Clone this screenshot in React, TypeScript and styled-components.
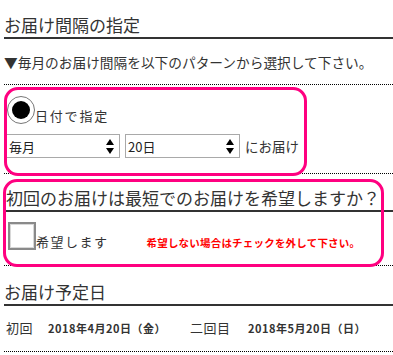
import React from 'react';
import styled, { createGlobalStyle } from 'styled-components';

const GlobalStyle = createGlobalStyle`
  body {
    margin: 0;
    background: #fff;
  }
`;

const Page = styled.div`
  font-family: "Noto Sans CJK JP", "Noto Sans", sans-serif;
  color: #333;
  padding-left: 4px;
  width: 389px;
  overflow: hidden;
`;

const Heading = styled.h2<{ $top: number; $inset?: number }>`
  margin: 0 0 0 ${p => p.$inset || 0}px;
  padding: ${p => p.$top}px 0 2px;
  font-size: 17px;
  font-weight: normal;
  line-height: 20px;
  border-bottom: 2px solid #333;
  white-space: nowrap;
`;

const Lead = styled.p`
  margin: 0;
  padding: 13px 0 12px;
  font-size: 13.7px;
  line-height: 20px;
  border-bottom: 1px dotted #000;
  white-space: nowrap;
`;

const Section = styled.div<{ $top: number; $bottom: number }>`
  position: relative;
  padding: ${p => p.$top}px 0 ${p => p.$bottom}px;
  border-bottom: 1px dotted #000;
`;

// pink annotation frame drawn over the form
const Highlight = styled.div<{ $top: number; $left: number; $w: number; $h: number }>`
  position: absolute;
  top: ${p => p.$top}px;
  left: ${p => p.$left}px;
  width: ${p => p.$w}px;
  height: ${p => p.$h}px;
  box-sizing: border-box;
  border: 3px solid #ff0080;
  border-radius: 14px;
  pointer-events: none;
`;

const Row = styled.div<{ $align?: string }>`
  display: flex;
  align-items: ${p => p.$align || 'center'};
`;

const Radio = styled.span`
  box-sizing: border-box;
  width: 28px;
  height: 28px;
  margin-left: 3px;
  border-radius: 50%;
  border: 1px solid #777;
  background: #fff;
  display: flex;
  align-items: center;
  justify-content: center;
`;

const RadioDot = styled.span`
  width: 18px;
  height: 18px;
  border-radius: 50%;
  background: #000;
`;

const Label = styled.span<{ $size?: number; $space?: number }>`
  font-size: ${p => p.$size || 13}px;
  letter-spacing: ${p => p.$space || 0}px;
  line-height: 16px;
  white-space: nowrap;
`;

const Selects = styled.div`
  display: flex;
  align-items: center;
  gap: 5px;
  margin: 10px 0 0 2px;
`;

const SelectBox = styled.div<{ $w: number }>`
  box-sizing: border-box;
  width: ${p => p.$w}px;
  height: 24px;
  border: 1px solid #a9a9a9;
  background: #fff;
  display: flex;
  align-items: center;
  justify-content: space-between;
  padding: 0 5px 0 2px;
  font-size: 13px;
  color: #222;
`;

const Checkbox = styled.span`
  box-sizing: border-box;
  width: 28px;
  height: 28px;
  margin-left: 4px;
  border: 2px solid #8a8a8a;
  box-shadow: inset 0 0 0 1px #d8d8d8;
  background: #fff;
`;

const Note = styled.span`
  margin-left: 38px;
  font-size: 10.5px;
  letter-spacing: 0.2px;
  font-weight: bold;
  color: #ff0000;
  line-height: 14px;
  white-space: nowrap;
`;

const Schedule = styled.div`
  display: flex;
  align-items: center;
  padding: 12px 0 13px 2px;
  line-height: 20px;
  border-bottom: 1px dotted #000;
`;

const Term = styled.span<{ $w: number }>`
  width: ${p => p.$w}px;
  font-size: 13px;
  letter-spacing: 0.5px;
  white-space: nowrap;
`;

const DateText = styled.span<{ $w: number }>`
  width: ${p => p.$w}px;
  font-size: 11px;
  letter-spacing: 0.5px;
  font-weight: bold;
  white-space: nowrap;
`;

const SpinArrows = () => (
  <svg width="8" height="15" viewBox="0 0 8 15">
    <path d="M4 0 L8 6 L0 6 Z" fill="#000" />
    <path d="M0 9 L8 9 L4 15 Z" fill="#000" />
  </svg>
);

export default function App() {
  return (
    <Page>
      <GlobalStyle />
      <Heading $top={15}>お届け間隔の指定</Heading>
      <Lead>▼毎月のお届け間隔を以下のパターンから選択して下さい。</Lead>

      <Section $top={11} $bottom={15}>
        <Row $align="flex-end">
          <Radio>
            <RadioDot />
          </Radio>
          <Label $space={1.8}>日付で指定</Label>
        </Row>
        <Selects>
          <SelectBox $w={114}>
            毎月
            <SpinArrows />
          </SelectBox>
          <SelectBox $w={115}>
            20日
            <SpinArrows />
          </SelectBox>
          <Label $size={13.5}>にお届け</Label>
        </Selects>
        <Highlight $top={2} $left={0} $w={303} $h={89} />
      </Section>

      <Section $top={0} $bottom={15}>
        <Heading $top={14} $inset={2}>
          初回のお届けは最短でのお届けを希望しますか？
        </Heading>
        <Row $align="flex-end" style={{ marginTop: 10 }}>
          <Checkbox />
          <Label $space={1.5}>希望します</Label>
          <Note>希望しない場合はチェックを外して下さい。</Note>
        </Row>
        <Highlight $top={5} $left={-1} $w={381} $h={88} />
      </Section>

      <Heading $top={16}>お届け予定日</Heading>
      <Schedule>
        <Term $w={42}>初回</Term>
        <DateText $w={142}>2018年4月20日（金）</DateText>
        <Term $w={58}>二回目</Term>
        <DateText $w={120}>2018年5月20日（日）</DateText>
      </Schedule>
    </Page>
  );
}
